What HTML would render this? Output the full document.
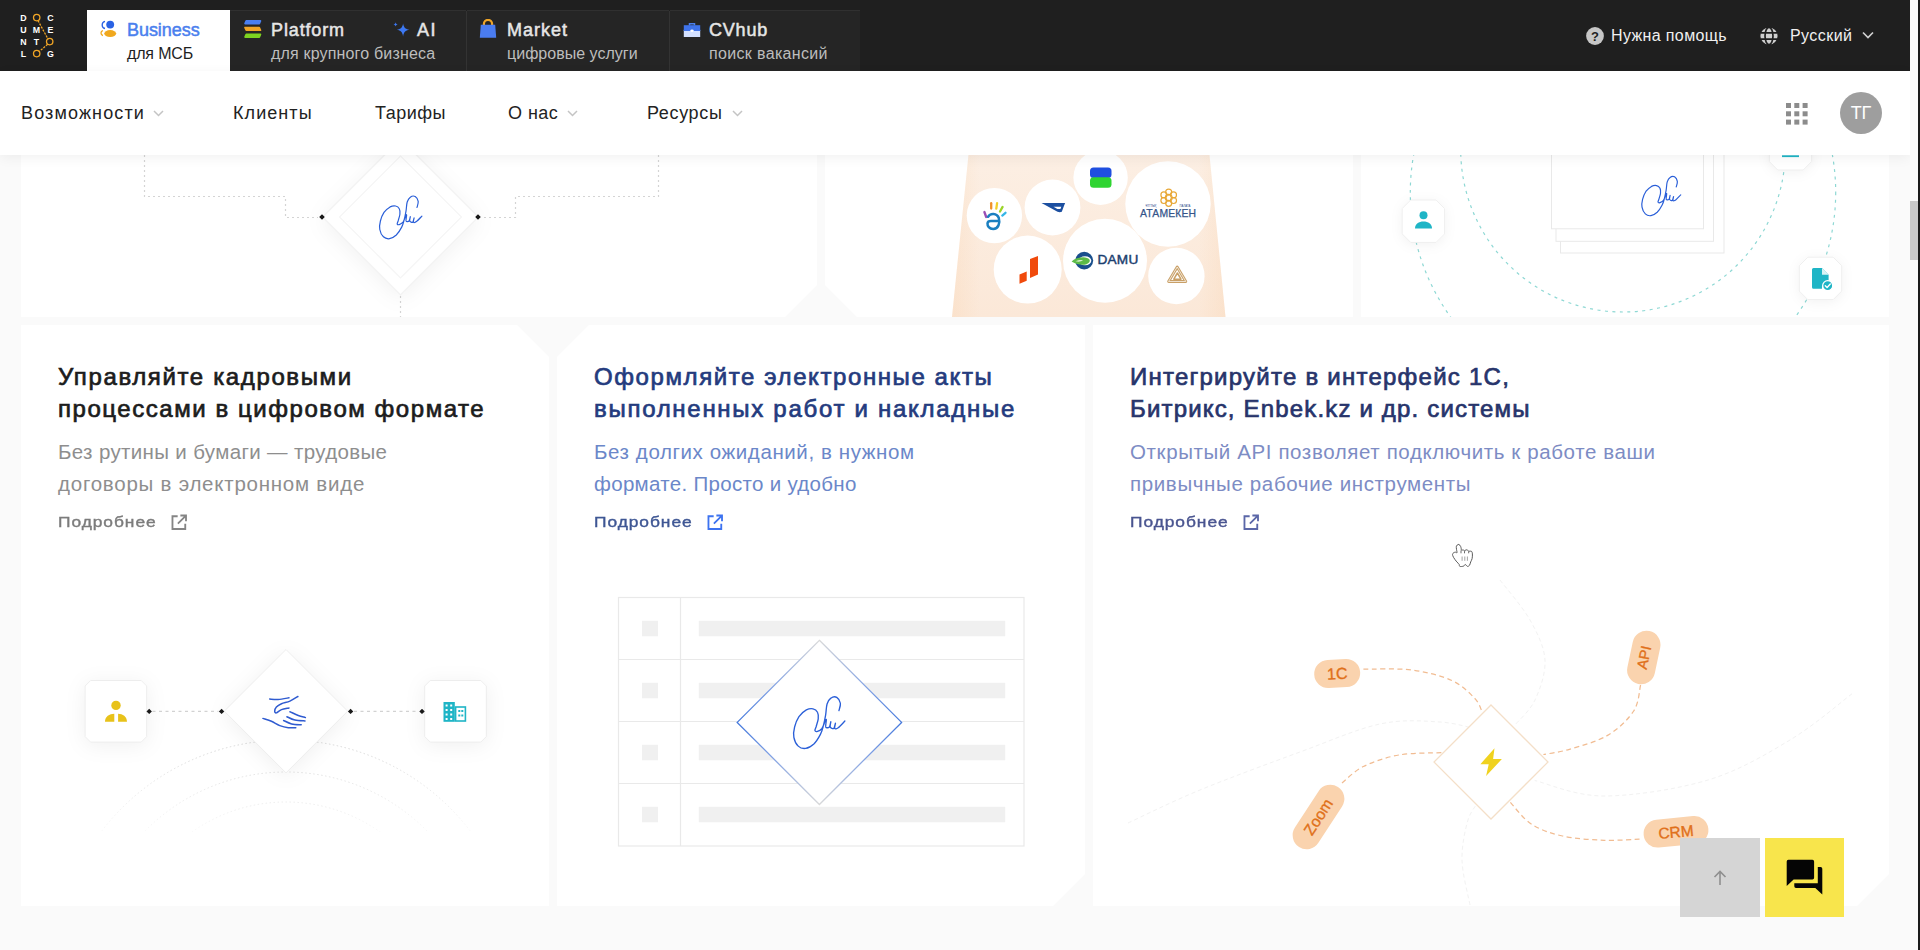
<!DOCTYPE html>
<html lang="ru">
<head>
<meta charset="utf-8">
<title>Documentolog Business</title>
<style>
*{box-sizing:border-box;margin:0;padding:0}
html,body{width:1920px;height:950px;overflow:hidden;background:#fafafa;font-family:"Liberation Sans",sans-serif;color:#1f1f1f}
.abs{position:absolute}
#page{position:absolute;left:0;top:0;width:1920px;height:950px;overflow:hidden;background:#fafafa}
/* ---------- top dark bar ---------- */
#topbar{position:absolute;left:0;top:0;width:1910px;height:71px;background:#1f1f1f}
.tab{position:absolute;top:10px;height:61px;background:#252525;border-top:1px solid #303030}
.tab.active{background:#fff;border-top:1px solid #fff;top:10px}
.tab .t1{position:absolute;white-space:nowrap;font-weight:normal;-webkit-text-stroke:.5px currentColor;font-size:18px;color:#e6e6e6;letter-spacing:0}
.tab .t2{position:absolute;white-space:nowrap;font-size:16px;color:#bdbdbd}
.tab.active .t1{color:#4a80ee}
.tab.active .t2{color:#1f1f1f}
.tsep{position:absolute;top:11px;width:1px;height:60px;background:#333}
.topr{position:absolute;white-space:nowrap;color:#f0f0f0;font-size:16px}
/* ---------- nav ---------- */
#nav{position:absolute;left:0;top:71px;width:1910px;height:84px;background:#fff;box-shadow:0 3px 12px rgba(0,0,0,.055);z-index:5}
.nv{position:absolute;top:0;height:84px;line-height:84px;font-size:18px;color:#222;white-space:nowrap}
/* ---------- cards ---------- */
.card{position:absolute;background:#fff;overflow:hidden}
.h{position:absolute;white-space:nowrap;font-weight:normal;-webkit-text-stroke:.7px currentColor;font-size:24px;line-height:32px}
.h span{display:block;width:max-content}
.d{position:absolute;white-space:nowrap;font-size:20.5px;line-height:32px}
.d span{display:block;width:max-content}
.more{position:absolute;white-space:nowrap;font-size:15.5px;font-weight:normal;-webkit-text-stroke:.4px currentColor;letter-spacing:.85px;transform:scaleX(1.12);transform-origin:0 0}
/* ---------- scrollbar ---------- */
#sb{position:absolute;left:1910px;top:0;width:10px;height:950px;background:#fafafa;z-index:20}
#sb i{position:absolute;left:0;top:201px;width:8px;height:59px;background:#c8c8c8}
#sb b{position:absolute;left:8px;top:0;width:2px;height:950px;background:#1a1a1a}
</style>
</head>
<body>
<div id="page">

<!-- CARDS ROW 1 -->
<div class="card" id="c1" style="left:21px;top:140px;width:796px;height:177px;clip-path:polygon(0 0,100% 0,100% 145px,764px 100%,0 100%)">
<svg class="abs" style="left:0;top:0" width="796" height="177" viewBox="0 0 796 177">
 <g fill="none" stroke="#d4d4d4" stroke-width="1.200" stroke-dasharray="2 3">
  <path d="M123.5 0V56.500H264.500V77.500H297"/>
  <path d="M637.5 0V56.500H494.500V77.500H461"/>
  <path d="M379.500 156V177"/>
 </g>
 <path d="M379.500 -1L457.500 77 379.500 155 301.500 77z" fill="#fff" stroke="#f3f3f3" stroke-width="1.500" style="filter:drop-shadow(0 4px 10px rgba(0,0,0,.05))"/>
 <path d="M379.500 16L440.500 77 379.500 138 318.500 77z" fill="#fff" stroke="#f5f5f5" stroke-width="1.200"/>
 <path d="M301 74.200l2.800 2.800-2.800 2.800-2.800-2.800z M457 74.200l2.800 2.800-2.800 2.800-2.800-2.800z" fill="#1a1a1a"/>
</svg><svg class="abs" style="left:349px;top:48px" width="60.0" height="58.0" viewBox="0 0 60 58"><path d="M47.0 19.5C47.2 18.5 48.5 15.3 48.2 13.4C47.9 11.6 46.5 9.3 45.2 8.5C43.9 7.8 41.6 8.2 40.3 9.2C39.0 10.1 38.0 11.7 37.2 14.0C36.5 16.4 36.5 20.2 36.0 23.2C35.5 26.1 34.9 29.1 34.2 31.7C33.5 34.4 33.1 36.5 31.7 39.1C30.4 41.6 28.3 45.1 26.3 47.0C24.2 48.9 21.7 50.4 19.5 50.7C17.4 51.0 15.1 50.4 13.4 48.8C11.8 47.3 10.3 44.2 9.8 41.5C9.3 38.9 9.7 35.8 10.4 33.0C11.1 30.1 12.4 26.8 14.0 24.4C15.7 22.1 18.2 20.0 20.1 18.9C22.1 17.9 24.1 17.7 25.6 18.0C27.2 18.3 28.6 19.4 29.3 20.8C30.0 22.1 30.1 24.2 29.9 26.3C29.7 28.3 28.5 31.3 28.1 33.0C27.6 34.6 27.0 35.4 27.2 36.0C27.4 36.6 28.3 36.9 29.3 36.6C30.3 36.3 31.9 35.5 33.0 34.2C34.0 32.9 34.8 29.9 35.4 28.7C36.0 27.5 36.5 26.1 36.6 26.9C36.8 27.6 35.7 31.9 36.1 33.0C36.5 34.0 38.4 33.7 39.1 33.0C39.8 32.3 40.2 28.7 40.3 28.7C40.4 28.7 39.4 32.1 39.8 33.0C40.2 33.9 42.0 34.7 42.7 34.2C43.4 33.7 44.0 29.9 44.1 29.9C44.2 29.9 43.1 33.6 43.5 34.2C43.9 34.8 45.0 34.6 46.4 33.6C47.8 32.6 51.0 29.0 51.9 28.1" fill="none" stroke="#2a5fd8" stroke-width="1.20" stroke-linecap="round"/></svg>
</div>
<div class="card" id="c2" style="left:825px;top:140px;width:528px;height:177px;clip-path:polygon(0 0,100% 0,100% 100%,32px 100%,0 145px)">
<svg class="abs" style="left:0;top:0" width="528" height="177" viewBox="0 0 528 177">
 <defs><linearGradient id="pg" x1="0" y1="0" x2="0" y2="1"><stop offset="0" stop-color="#fcefe4"/><stop offset="1" stop-color="#fbe8d8"/></linearGradient>
 <linearGradient id="pg2" x1="0" y1="0" x2="1" y2="0"><stop offset="0" stop-color="#f9cfa6" stop-opacity=".25"/><stop offset=".1" stop-color="#f9cfa6" stop-opacity="0"/><stop offset=".9" stop-color="#f9cfa6" stop-opacity="0"/><stop offset="1" stop-color="#f9cfa6" stop-opacity=".25"/></linearGradient></defs>
 <path d="M145 0H383L400.500 177H127z" fill="url(#pg)"/>
 <path d="M145 0H383L400.500 177H127z" fill="url(#pg2)"/>
 <g fill="#fff" style="filter:blur(.5px)"><circle cx="275.6" cy="37.7" r="27.2"/><circle cx="169.4" cy="75.6" r="27.7"/><circle cx="227.5" cy="67.5" r="27.9"/><circle cx="343.0" cy="64.0" r="42.7"/><circle cx="202.7" cy="129.6" r="34"/><circle cx="280.0" cy="120.8" r="42"/><circle cx="351.4" cy="136.0" r="28.2"/></g>
 <!-- B logo -->
 <rect x="265" y="27.500" width="21.500" height="10.600" rx="3.500" fill="#1f4fe0"/>
 <rect x="265" y="37.300" width="21.500" height="10.400" rx="3.500" fill="#2fd431"/>
 <!-- hand logo -->
 <g fill="none" stroke-linecap="round" stroke-width="2.300">
  <path d="M161.200 77l-1.800-5" stroke="#9b4fb5"/><path d="M166.200 68.600v-5.400" stroke="#f0902a"/><path d="M171.300 68.600l.8-5.400" stroke="#f2cf2a"/><path d="M175 71.500l2.600-4.600" stroke="#9bd42a"/><path d="M177.300 75.600l3.200-2.800" stroke="#35b6e6"/>
 </g>
 <path d="M163 76.800C165.200 72.800 172 72.800 173.800 78C175.300 83 173.300 89 168.200 89C164.200 89 162.300 86 162.500 83.300C162.700 81.400 164 81 166 81H174" fill="none" stroke="#1a7fc0" stroke-width="2.500" stroke-linecap="round"/>
 <!-- swoosh logo -->
 <path d="M216.500 63h23.600l-3.300 8.800c-1.200.5-3 .5-4.300 0z" fill="#1c4fa0"/>
 <path d="M228.500 66.800h7.800l-.9 2.300h-3z" fill="#fff"/>
 <!-- atameken -->
 <g fill="none" stroke="#e8a838" stroke-width="1.200"><circle cx="343.7" cy="52.1" r="3"/><circle cx="348.5" cy="54.9" r="3"/><circle cx="348.5" cy="60.5" r="3"/><circle cx="343.7" cy="63.3" r="3"/><circle cx="338.9" cy="60.5" r="3"/><circle cx="338.9" cy="54.9" r="3"/><circle cx="343.7" cy="57.7" r="3.400"/></g>
 <text x="343.100" y="77" font-family="Liberation Sans, sans-serif" font-size="10.400" letter-spacing=".150" text-anchor="middle" fill="#34548a" stroke="#34548a" stroke-width=".250">АТАМЕКЕН</text>
 <text x="326" y="67.300" font-family="Liberation Sans, sans-serif" font-size="2.800" text-anchor="middle" fill="#1f4487">ҰЛТТЫҚ</text>
 <text x="360" y="67.300" font-family="Liberation Sans, sans-serif" font-size="2.800" text-anchor="middle" fill="#1f4487">ПАЛАТА</text>
 <!-- orange bars -->
 <path d="M194.500 134.500l7.200-2.900v9.200l-7.200 3z M205 119l8-3v18.500l-8 3.400z" fill="#f04a0c"/>
 <!-- DAMU -->
 <ellipse cx="259.200" cy="120.600" rx="9" ry="8.800" fill="#1a4f8c"/>
 <ellipse cx="260" cy="120.800" rx="6.300" ry="4.500" fill="#fff"/>
 <path d="M246.600 121.500c4-3.600 11-5 15.500-3.600 2.600.8 3.400 2.600 2.200 4.300-2.600 3.400-10.500 3.700-17.700-.7z" fill="#5cba47"/>
 <path d="M250.500 121.300c2.500-1.300 5.500-1.700 7.500-1.200-1.500 1.600-4.500 2-7.500 1.200z" fill="#d4efc9"/>
 <text x="293" y="123.800" font-family="Liberation Sans, sans-serif" font-size="13.600" letter-spacing=".200" text-anchor="middle" fill="#1b3e6f" stroke="#1b3e6f" stroke-width=".450">DAMU</text>
 <!-- gold triangle -->
 <g fill="none" stroke="#c9a067" stroke-linejoin="round">
  <path d="M352.200 127l8.600 14.500h-17.200z" stroke-width="2.800"/>
  <path d="M352.200 127l8.600 14.500h-17.200z" stroke="#fff" stroke-width=".700"/>
  <path d="M352.400 133l3.600 6.200h-7.200z" stroke-width="1.500"/>
 </g>
</svg>
</div>
<div class="card" id="c3" style="left:1361px;top:140px;width:528px;height:177px">
<svg class="abs" style="left:0;top:0" width="528" height="177" viewBox="1361 140 528 177">
 <g fill="none" stroke="#8ed8d4" stroke-width="1.200" stroke-dasharray="3 4.500">
  <circle cx="1623" cy="192.400" r="212.700"/>
  <circle cx="1623" cy="149.700" r="162.300"/>
 </g>
 <g fill="#fff" stroke="#e9e9e9" stroke-width="1">
  <rect x="1560.500" y="130" width="163.500" height="123"/>
  <rect x="1556" y="130" width="157.500" height="111.300"/>
  <rect x="1551.500" y="130" width="152" height="98.800"/>
 </g>
 <g fill="#fff" stroke="#efefef" stroke-width="1" style="filter:drop-shadow(0 2px 6px rgba(0,0,0,.05))">
  <path d="M1410.7 200H1436.1L1444.6 208.5V233.9L1436.1 242.4H1410.7L1402.2 233.9V208.5z"/><path d="M1807.8 257.2H1833.2L1841.7 265.7V291.1L1833.2 299.6H1807.8L1799.3 291.1V265.7z"/><path d="M1777.8 127.6H1803.2L1811.7 136.1V161.5L1803.2 170H1777.8L1769.3 161.5V136.1z"/>
 </g>
 <!-- person -->
 <circle cx="1423.500" cy="215.300" r="4" fill="#1fb5c6"/>
 <path d="M1415 228.400c0-4.200 3.800-6.800 8.500-6.800s8.500 2.600 8.500 6.800z" fill="#1fb5c6"/>
 <!-- top icon remnant -->
 <rect x="1782" y="155.300" width="17" height="1.800" fill="#1fb5c6"/>
 <!-- doc check -->
 <path d="M1813.500 268.100h8.500l6.600 6.600v6a6.700 6.700 0 0 0-6.600 8H1813.500a1.500 1.500 0 0 1-1.500-1.500v-17.600a1.500 1.500 0 0 1 1.500-1.500z" fill="#1fb5c6"/>
 <path d="M1822 268.100v6.600h6.600z" fill="#d9f3f5"/>
 <circle cx="1827.700" cy="285.700" r="5" fill="#1fb5c6" stroke="#fff" stroke-width="1.200"/>
 <path d="M1825.300 285.700l1.800 1.800 3.200-3.400" fill="none" stroke="#fff" stroke-width="1.400" stroke-linecap="round" stroke-linejoin="round"/>
</svg><svg class="abs" style="left:271.72px;top:28.708px" width="55.2" height="53.4" viewBox="0 0 60 58"><path d="M47.0 19.5C47.2 18.5 48.5 15.3 48.2 13.4C47.9 11.6 46.5 9.3 45.2 8.5C43.9 7.8 41.6 8.2 40.3 9.2C39.0 10.1 38.0 11.7 37.2 14.0C36.5 16.4 36.5 20.2 36.0 23.2C35.5 26.1 34.9 29.1 34.2 31.7C33.5 34.4 33.1 36.5 31.7 39.1C30.4 41.6 28.3 45.1 26.3 47.0C24.2 48.9 21.7 50.4 19.5 50.7C17.4 51.0 15.1 50.4 13.4 48.8C11.8 47.3 10.3 44.2 9.8 41.5C9.3 38.9 9.7 35.8 10.4 33.0C11.1 30.1 12.4 26.8 14.0 24.4C15.7 22.1 18.2 20.0 20.1 18.9C22.1 17.9 24.1 17.7 25.6 18.0C27.2 18.3 28.6 19.4 29.3 20.8C30.0 22.1 30.1 24.2 29.9 26.3C29.7 28.3 28.5 31.3 28.1 33.0C27.6 34.6 27.0 35.4 27.2 36.0C27.4 36.6 28.3 36.9 29.3 36.6C30.3 36.3 31.9 35.5 33.0 34.2C34.0 32.9 34.8 29.9 35.4 28.7C36.0 27.5 36.5 26.1 36.6 26.9C36.8 27.6 35.7 31.9 36.1 33.0C36.5 34.0 38.4 33.7 39.1 33.0C39.8 32.3 40.2 28.7 40.3 28.7C40.4 28.7 39.4 32.1 39.8 33.0C40.2 33.9 42.0 34.7 42.7 34.2C43.4 33.7 44.0 29.9 44.1 29.9C44.2 29.9 43.1 33.6 43.5 34.2C43.9 34.8 45.0 34.6 46.4 33.6C47.8 32.6 51.0 29.0 51.9 28.1" fill="none" stroke="#2a5fd8" stroke-width="1.30" stroke-linecap="round"/></svg>
</div>

<!-- CARDS ROW 2 -->
<div class="card" id="c4" style="left:21px;top:325px;width:528px;height:581px;clip-path:polygon(0 0,496px 0,100% 32px,100% 100%,0 100%)">
<svg class="abs" style="left:0;top:0" width="528" height="581" viewBox="21 325 528 581">
 <defs><linearGradient id="fa" x1="0" y1="740" x2="0" y2="832" gradientUnits="userSpaceOnUse"><stop offset="0" stop-color="#d6d6d6"/><stop offset="1" stop-color="#d6d6d6" stop-opacity=".15"/></linearGradient>
 <clipPath id="ca"><rect x="60" y="735" width="460" height="97"/></clipPath></defs>
 <g fill="none" stroke="url(#fa)" stroke-width="1" stroke-dasharray="1.500 2.500" clip-path="url(#ca)">
  <circle cx="286" cy="972" r="232"/><circle cx="286" cy="970" r="198"/><circle cx="286" cy="964.300" r="162.300"/>
 </g>
 <g fill="#fff" stroke="#ededed" stroke-width="1" style="filter:drop-shadow(0 3px 10px rgba(0,0,0,.06))">
  <path d="M90.6 680.5H141.2L146.7 686V736.6L141.2 742.1H90.6L85.1 736.6V686z"/><path d="M430.2 680.5H480.8L486.3 686V736.6L480.8 742.1H430.2L424.7 736.6V686z"/>
  <path d="M286 649.500L347.700 711.200 286 772.900 224.300 711.200z"/>
 </g>
 <path d="M152.500 711.400H218.500M354 711.400H419" fill="none" stroke="#d2d2d2" stroke-width="1.200" stroke-dasharray="3 3.500"/>
 <path d="M149.2 708.7l2.7 2.7-2.7 2.7-2.7-2.7zM221.6 708.7l2.7 2.7-2.7 2.7-2.7-2.7zM350.6 708.7l2.7 2.7-2.7 2.7-2.7-2.7zM422 708.7l2.7 2.7-2.7 2.7-2.7-2.7z" fill="#1a1a1a"/>
 <!-- person -->
 <circle cx="116" cy="705.400" r="4.700" fill="#e8c21a"/>
 <path d="M105 721.800c0-5.200 4.400-8 9.300-8v8z M127 721.800c0-5.200-4.400-8-8.900-8v8z" fill="#e8c21a"/>
 <path d="M114.300 713.800h3.800l-.6 2.600.6 5.400h-3.800l.6-5.400z" fill="#e8c21a" opacity=".0"/>
 <!-- building -->
 <rect x="443.500" y="702" width="11.300" height="19.800" fill="#1fb5c6"/>
 <rect x="455.600" y="707" width="9.800" height="14" fill="#fff" stroke="#1fb5c6" stroke-width="1.600"/>
 <g fill="#fff"><rect x="445.6" y="704.5" width="2" height="2"/><rect x="445.6" y="709" width="2" height="2"/><rect x="445.6" y="713.5" width="2" height="2"/><rect x="445.6" y="718" width="2" height="2"/><rect x="450.2" y="704.5" width="2" height="2"/><rect x="450.2" y="709" width="2" height="2"/><rect x="450.2" y="713.5" width="2" height="2"/><rect x="450.2" y="718" width="2" height="2"/></g>
 <g fill="#1fb5c6"><rect x="458.300" y="710" width="2" height="2"/><rect x="461.300" y="710" width="2" height="2"/><rect x="458.300" y="714.500" width="2" height="2"/><rect x="461.300" y="714.500" width="2" height="2"/></g>
 <!-- handshake -->
 <path d="M269.7 699.0C271.1 699.1 274.9 699.7 278.1 699.5C281.3 699.3 287.2 698.1 289.0 697.8M297.9 696.5C296.6 697.3 292.6 699.9 289.9 701.1C287.2 702.3 283.8 702.7 281.5 703.7C279.2 704.7 277.5 705.8 276.4 707.0C275.3 708.2 274.7 710.2 274.7 711.2C274.7 712.2 275.3 713.2 276.4 712.9C277.5 712.6 279.4 710.4 281.5 709.6C283.6 708.8 287.8 708.2 289.0 707.9M289.9 711.7C291.3 712.3 295.7 714.5 298.3 715.5C300.9 716.5 304.2 717.2 305.4 717.6M286.9 716.7C288.2 717.3 291.9 719.4 294.9 720.1C297.9 720.8 303.3 720.8 305.0 720.9M283.6 720.5C284.9 721.1 288.7 723.2 291.6 723.9C294.5 724.6 299.6 724.6 301.2 724.7M262.9 718.4C264.3 718.9 268.6 720.1 271.4 721.3C274.2 722.5 277.0 724.5 279.8 725.6C282.6 726.7 285.5 727.4 288.2 727.7C290.9 728.1 294.5 727.7 295.8 727.7" fill="none" stroke="#2f5bd0" stroke-width="1.500" stroke-linecap="round"/>
</svg>
</div>
<div class="card" id="c5" style="left:557px;top:325px;width:528px;height:581px;clip-path:polygon(32px 0,100% 0,100% 549px,496px 100%,0 100%,0 32px)">
<svg class="abs" style="left:0;top:0" width="528" height="581" viewBox="557 325 528 581">
 <defs><linearGradient id="dg" x1="0" y1="640" x2="0" y2="805" gradientUnits="userSpaceOnUse"><stop offset="0" stop-color="#d9d9d9"/><stop offset=".3" stop-color="#7fa0e4"/><stop offset=".5" stop-color="#4478dc"/><stop offset=".7" stop-color="#7fa0e4"/><stop offset="1" stop-color="#d9d9d9"/></linearGradient></defs>
 <rect x="618.500" y="597.500" width="405.500" height="248.500" fill="#fff" stroke="#e9e9e9" stroke-width="1.200"/>
 <path d="M680.500 597.500V846M618.500 659.500H1024M618.500 721.500H1024M618.500 783.500H1024" fill="none" stroke="#e9e9e9" stroke-width="1.200"/>
 <g fill="#f0f0f0"><rect x="642" y="620.8" width="16" height="15.500"/><rect x="698.800" y="620.8" width="306.400" height="15.500"/><rect x="642" y="682.8" width="16" height="15.500"/><rect x="698.800" y="682.8" width="306.400" height="15.500"/><rect x="642" y="744.8" width="16" height="15.500"/><rect x="698.800" y="744.8" width="306.400" height="15.500"/><rect x="642" y="806.8" width="16" height="15.500"/><rect x="698.800" y="806.8" width="306.400" height="15.500"/></g>
 <path d="M819.400 640.300L901.600 722.400 819.400 804.500 737.200 722.400z" fill="#fff" stroke="url(#dg)" stroke-width="1.300"/>
</svg><svg class="abs" style="left:224.6px;top:361.8px" width="72.7" height="70.3" viewBox="0 0 60 58"><path d="M47.0 19.5C47.2 18.5 48.5 15.3 48.2 13.4C47.9 11.6 46.5 9.3 45.2 8.5C43.9 7.8 41.6 8.2 40.3 9.2C39.0 10.1 38.0 11.7 37.2 14.0C36.5 16.4 36.5 20.2 36.0 23.2C35.5 26.1 34.9 29.1 34.2 31.7C33.5 34.4 33.1 36.5 31.7 39.1C30.4 41.6 28.3 45.1 26.3 47.0C24.2 48.9 21.7 50.4 19.5 50.7C17.4 51.0 15.1 50.4 13.4 48.8C11.8 47.3 10.3 44.2 9.8 41.5C9.3 38.9 9.7 35.8 10.4 33.0C11.1 30.1 12.4 26.8 14.0 24.4C15.7 22.1 18.2 20.0 20.1 18.9C22.1 17.9 24.1 17.7 25.6 18.0C27.2 18.3 28.6 19.4 29.3 20.8C30.0 22.1 30.1 24.2 29.9 26.3C29.7 28.3 28.5 31.3 28.1 33.0C27.6 34.6 27.0 35.4 27.2 36.0C27.4 36.6 28.3 36.9 29.3 36.6C30.3 36.3 31.9 35.5 33.0 34.2C34.0 32.9 34.8 29.9 35.4 28.7C36.0 27.5 36.5 26.1 36.6 26.9C36.8 27.6 35.7 31.9 36.1 33.0C36.5 34.0 38.4 33.7 39.1 33.0C39.8 32.3 40.2 28.7 40.3 28.7C40.4 28.7 39.4 32.1 39.8 33.0C40.2 33.9 42.0 34.7 42.7 34.2C43.4 33.7 44.0 29.9 44.1 29.9C44.2 29.9 43.1 33.6 43.5 34.2C43.9 34.8 45.0 34.6 46.4 33.6C47.8 32.6 51.0 29.0 51.9 28.1" fill="none" stroke="#2a5fd8" stroke-width="1.11" stroke-linecap="round"/></svg>
</div>
<div class="card" id="c6" style="left:1093px;top:325px;width:796px;height:581px;clip-path:polygon(0 0,100% 0,100% 549px,764px 100%,0 100%)">
<svg class="abs" style="left:0;top:0" width="796" height="581" viewBox="1093 325 796 581">
 <path d="M1128.0 823.0C1140.0 817.5 1171.3 801.8 1200.0 790.0C1228.7 778.2 1270.0 763.0 1300.0 752.0C1330.0 741.0 1356.7 729.0 1380.0 724.0C1403.3 719.0 1423.3 721.0 1440.0 722.0C1456.7 723.0 1473.3 728.7 1480.0 730.0M1852.0 693.8C1841.7 701.5 1814.0 725.6 1790.0 740.0C1766.0 754.4 1739.0 770.7 1708.0 780.0C1677.0 789.3 1632.9 795.9 1604.0 796.0C1575.1 796.1 1546.2 783.1 1534.7 780.5M1500.0 580.0C1505.0 586.7 1522.5 606.7 1530.0 620.0C1537.5 633.3 1544.2 646.7 1545.0 660.0C1545.8 673.3 1540.0 689.2 1535.0 700.0C1530.0 710.8 1518.3 720.8 1515.0 725.0M1470.0 905.0C1468.7 897.5 1462.3 874.2 1462.0 860.0C1461.7 845.8 1465.0 830.0 1468.0 820.0C1471.0 810.0 1478.0 803.3 1480.0 800.0" fill="none" stroke="#f2f2f2" stroke-width="1" stroke-dasharray="4 3"/>
 <path d="M1363.4 669.2C1371.4 669.3 1396.7 668.1 1411.4 670.0C1426.1 671.9 1441.3 675.8 1451.8 680.5C1462.3 685.2 1469.5 693.0 1474.6 698.2C1479.7 703.5 1480.9 709.7 1482.2 712.0M1342.0 783.0C1345.6 780.2 1353.9 771.2 1363.4 766.5C1372.9 761.8 1385.8 757.3 1398.8 755.0C1411.8 752.7 1434.5 753.0 1441.7 752.6M1640.6 685.0C1639.4 689.3 1639.2 702.6 1633.7 711.0C1628.2 719.4 1618.3 729.0 1607.6 735.4C1596.9 741.8 1580.1 746.1 1569.4 749.3C1558.7 752.5 1547.7 753.6 1543.4 754.5M1510.4 802.4C1513.9 806.0 1522.6 818.4 1531.2 824.0C1539.9 829.6 1550.3 833.3 1562.5 836.0C1574.7 838.7 1590.8 839.8 1604.2 840.3C1617.6 840.8 1636.5 839.1 1643.0 838.9" fill="none" stroke="#f1bc92" stroke-width="1.250" stroke-dasharray="5 3.500"/>
 <path d="M1491 705L1548 762 1491 819 1434 762z" fill="#fff" stroke="#f4dfc8" stroke-width="1.250"/>
 <path d="M1494.500 748.300L1480.400 764.200h8.300l-2.600 11.800 15.800-17h-8.800z" fill="#f0d21f"/>
 <g transform="translate(1337.2 673.5) rotate(-3)"><rect x="-23.0" y="-14.0" width="46" height="28" rx="14.0" fill="#fad3ae"/><text x="0" y="5.6" text-anchor="middle" font-family="Liberation Sans, sans-serif" font-size="16" fill="#e0701a" stroke="#e0701a" stroke-width=".35">1C</text></g>
 <g transform="translate(1643.8 657.5) rotate(-78)"><rect x="-27.0" y="-14.0" width="54" height="28" rx="14.0" fill="#fad3ae"/><text x="0" y="5.2" text-anchor="middle" font-family="Liberation Sans, sans-serif" font-size="14.5" fill="#e0701a" stroke="#e0701a" stroke-width=".35">API</text></g>
 <g transform="translate(1318.5 817) rotate(-57)"><rect x="-35.75" y="-14.0" width="71.5" height="28" rx="14.0" fill="#fad3ae"/><text x="0" y="5.2" text-anchor="middle" font-family="Liberation Sans, sans-serif" font-size="15.5" fill="#e0701a" stroke="#e0701a" stroke-width=".35">Zoom</text></g>
 <g transform="translate(1676 831.800) rotate(-5.500)"><rect x="-32.5" y="-14.0" width="65" height="28" rx="14.0" fill="#fad3ae"/><text x="0" y="5.6" text-anchor="middle" font-family="Liberation Sans, sans-serif" font-size="15.5" fill="#e0701a" stroke="#e0701a" stroke-width=".35">CRM</text></g>
</svg>
</div>


<!-- CARD TEXTS -->
<div class="h" style="left:58px;top:361px;color:#1c1c1c"><span style="letter-spacing:1.63px">Управляйте кадровыми</span><span style="letter-spacing:1.55px">процессами в цифровом формате</span></div>
<div class="d" style="left:58px;top:436px;color:#8e8e8e"><span style="letter-spacing:0.35px">Без рутины и бумаги — трудовые</span><span style="letter-spacing:0.76px">договоры в электронном виде</span></div>
<div class="more" style="left:58px;top:512.500px;color:#7c7c7c">Подробнее</div>
<svg class="abs" style="left:168.5px;top:512.500px" width="19.500" height="19.500" viewBox="0 0 18 18" fill="none" stroke="#858585" stroke-width="1.700"><path d="M8 3H3.200v11.800H15V10"/><path d="M10.500 2.300h5.200v5.200M15.400 2.600L8.200 9.800"/></svg>
<div class="h" style="left:594px;top:361px;color:#243b7e"><span style="letter-spacing:1.59px">Оформляйте электронные акты</span><span style="letter-spacing:1.71px">выполненных работ и накладные</span></div>
<div class="d" style="left:594px;top:436px;color:#6b87c9"><span style="letter-spacing:0.59px">Без долгих ожиданий, в нужном</span><span style="letter-spacing:0.31px">формате. Просто и удобно</span></div>
<div class="more" style="left:594px;top:512.500px;color:#3f5794">Подробнее</div>
<svg class="abs" style="left:704.5px;top:512.500px" width="19.500" height="19.500" viewBox="0 0 18 18" fill="none" stroke="#3d73f0" stroke-width="1.700"><path d="M8 3H3.200v11.800H15V10"/><path d="M10.500 2.300h5.200v5.200M15.400 2.600L8.200 9.800"/></svg>
<div class="h" style="left:1130px;top:361px;color:#27346b"><span style="letter-spacing:1.24px">Интегрируйте в интерфейс 1С,</span><span style="letter-spacing:1.17px">Битрикс, Enbek.kz и др. системы</span></div>
<div class="d" style="left:1130px;top:436px;color:#7d8cc4"><span style="letter-spacing:0.61px">Открытый API позволяет подключить к работе ваши</span><span style="letter-spacing:0.64px">привычные рабочие инструменты</span></div>
<div class="more" style="left:1130px;top:512.500px;color:#4a5590">Подробнее</div>
<svg class="abs" style="left:1240.5px;top:512.500px" width="19.500" height="19.500" viewBox="0 0 18 18" fill="none" stroke="#5b67a8" stroke-width="1.700"><path d="M8 3H3.200v11.800H15V10"/><path d="M10.500 2.300h5.200v5.200M15.400 2.600L8.200 9.800"/></svg>

<!-- FLOATING BUTTONS -->
<div class="abs" style="left:1680px;top:838px;width:79.500px;height:78.500px;background:#d5d5d5;z-index:8">
 <svg class="abs" style="left:30px;top:30px" width="20" height="20" viewBox="0 0 20 20"><path d="M10 17V3.500M4.500 9L10 3.500 15.500 9" fill="none" stroke="#8f8f8f" stroke-width="1.600"/></svg>
</div>
<div class="abs" style="left:1765px;top:838px;width:79px;height:78.500px;background:#f8e54c;z-index:8">
 <svg class="abs" style="left:20px;top:20px" width="40" height="40" viewBox="0 0 40 40"><path d="M3.400 1.700h24a1.700 1.700 0 0 1 1.700 1.700v16.400a1.700 1.700 0 0 1-1.700 1.700H8.600L1.700 28V3.400a1.700 1.700 0 0 1 1.700-1.700z" fill="#050505"/><path d="M32.800 9h2.800a1.700 1.700 0 0 1 1.700 1.700V36.500l-7-6.500H11a1.700 1.700 0 0 1-1.700-1.700V25.300h23.500z" fill="#050505"/></svg>
</div>
<!-- cursor -->
<svg class="abs" style="left:1450px;top:541px;z-index:9" width="26" height="28" viewBox="0 0 26 28"><path d="M8.1 3.3C7.8 3.6 6.7 4.3 6.4 5.2C6.1 6.0 6.4 7.2 6.5 8.3C6.6 9.4 7.2 11.2 7.0 11.7C6.9 12.2 6.1 11.2 5.6 11.2C5.0 11.2 4.2 11.3 3.7 11.7C3.2 12.0 2.6 12.6 2.5 13.4C2.5 14.1 2.8 15.0 3.5 16.3C4.2 17.6 5.9 19.8 6.8 20.9C7.8 22.1 8.7 22.5 9.1 23.3C9.6 24.0 9.0 25.0 9.8 25.4C10.5 25.7 12.7 25.5 13.6 25.1C14.5 24.8 14.6 23.4 15.3 23.5C15.9 23.5 16.7 25.2 17.4 25.4C18.1 25.5 18.9 25.0 19.5 24.3C20.0 23.6 20.3 22.1 20.7 20.9C21.2 19.8 21.8 18.9 22.1 17.6C22.4 16.2 22.5 14.1 22.4 12.9C22.3 11.7 22.1 10.9 21.6 10.4C21.1 10.0 19.9 10.2 19.5 10.2C19.0 10.2 19.2 10.8 18.8 10.6C18.5 10.4 18.0 9.2 17.4 8.9C16.8 8.7 15.7 8.9 15.3 9.1C14.8 9.3 14.9 10.2 14.6 10.2C14.3 10.2 13.9 9.0 13.4 8.8C12.8 8.7 11.9 9.6 11.5 9.2C11.2 8.9 11.3 7.4 11.0 6.6C10.8 5.8 10.5 4.9 10.0 4.3C9.5 3.8 8.4 3.5 8.1 3.3z" fill="#fff" stroke="#5a5a5a" stroke-width="1" stroke-linejoin="round"/><path d="M12.1 15.5V19.8M14.8 15.5V19.8M17.4 15.5V19.8" stroke="#8a8a8a" stroke-width=".800" fill="none"/><path d="M11.0 9.4V12.3M14.5 10.2V12.3M18.7 10.5V12.3" stroke="#5a5a5a" stroke-width=".900" fill="none"/></svg>

<!-- NAV -->
<div id="nav">
 <div class="nv" style="left:21px;letter-spacing:1.13px">Возможности</div>
 <svg class="abs" style="left:152px;top:38px" width="13" height="9" viewBox="0 0 13 9"><path d="M2 2l4.500 4.500L11 2" fill="none" stroke="#c4c4c4" stroke-width="1.500"/></svg>
 <div class="nv" style="left:233px;letter-spacing:1.07px">Клиенты</div>
 <div class="nv" style="left:375px;letter-spacing:0.48px">Тарифы</div>
 <div class="nv" style="left:508px;letter-spacing:0.46px">О нас</div>
 <svg class="abs" style="left:566px;top:38px" width="13" height="9" viewBox="0 0 13 9"><path d="M2 2l4.500 4.500L11 2" fill="none" stroke="#c4c4c4" stroke-width="1.500"/></svg>
 <div class="nv" style="left:647px;letter-spacing:0.65px">Ресурсы</div>
 <svg class="abs" style="left:731px;top:38px" width="13" height="9" viewBox="0 0 13 9"><path d="M2 2l4.500 4.500L11 2" fill="none" stroke="#c4c4c4" stroke-width="1.500"/></svg>
 <svg class="abs" style="left:1786px;top:32px" width="22" height="22" viewBox="0 0 22 22" fill="#8c8c8c">
  <rect x="0" y="0" width="5" height="5"/><rect x="8.300" y="0" width="5" height="5"/><rect x="16.600" y="0" width="5" height="5"/>
  <rect x="0" y="8.300" width="5" height="5"/><rect x="8.300" y="8.300" width="5" height="5"/><rect x="16.600" y="8.300" width="5" height="5"/>
  <rect x="0" y="16.600" width="5" height="5"/><rect x="8.300" y="16.600" width="5" height="5"/><rect x="16.600" y="16.600" width="5" height="5"/>
 </svg>
 <div class="abs" style="left:1840px;top:21px;width:42px;height:42px;border-radius:50%;background:#9e9e9e;color:#fff;font-size:18px;line-height:42px;text-align:center">ТГ</div>
</div>

<!-- TOP BAR -->
<div id="topbar">
<!-- logo -->
<svg class="abs" style="left:14px;top:8px" width="48" height="56" viewBox="0 0 48 56">
 <g font-family="Liberation Sans, sans-serif" font-weight="bold" font-size="8.800" fill="#fff" text-anchor="middle">
  <text x="9.5" y="12.6">D</text><text x="36.5" y="12.6">C</text>
  <text x="9.5" y="24.6">U</text><text x="22.5" y="24.6">M</text><text x="36.5" y="24.6">E</text>
  <text x="9.5" y="36.6">N</text><text x="22.5" y="36.6">T</text>
  <text x="9.5" y="48.6">L</text><text x="36.5" y="48.6">G</text>
 </g>
 <g fill="none" stroke="#f0a526" stroke-width="1.300">
  <circle cx="22.700" cy="9.600" r="3.200"/><circle cx="35.700" cy="33.600" r="3.200"/><circle cx="22.700" cy="45.600" r="3.200"/>
  <path d="M24 12.6 L34.2 31.4 M33.6 36.2 L24.8 43.9" stroke-dasharray="2.2 1.2"/>
 </g>
</svg>

<!-- Business tab -->
<div class="tab active" style="left:87px;width:143px">
 <svg class="abs" style="left:12px;top:9px" width="20" height="20" viewBox="0 0 20 20">
  <circle cx="11.200" cy="4.600" r="3.950" fill="#2a62e4"/>
  <path d="M6 1.300A3.700 3.700 0 0 0 6 8.500" fill="none" stroke="#2a62e4" stroke-width="1.300"/>
  <ellipse cx="11.200" cy="13.600" rx="6" ry="3.500" fill="#f0a81e"/>
  <path d="M4 10.600A2.500 2.500 0 0 0 4 15.500" fill="none" stroke="#f0a81e" stroke-width="1.300"/>
 </svg>
 <div class="t1" style="left:40px;top:9px;letter-spacing:-0.05px">Business</div>
 <div class="t2" style="left:40px;top:34px;letter-spacing:-0.16px">для МСБ</div>
</div>

<!-- Platform tab -->
<div class="tab" style="left:230px;width:236px">
 <svg class="abs" style="left:13px;top:8px" width="20" height="20" viewBox="0 0 20 20" stroke-linejoin="round" stroke-width="1.600">
  <path d="M3.200 1.900h14.300l-1.200 2.700H2z" fill="#4a7ff0" stroke="#4a7ff0"/><path d="M2 8.600h14.300l1.200 2.700H3.200z" fill="#f0a526" stroke="#f0a526"/><path d="M3.200 15.400h14.300l-1.200 2.700H2z" fill="#7ed321" stroke="#7ed321"/>
 </svg>
 <div class="t1" style="left:41px;top:9px;letter-spacing:0.87px">Platform</div>
 <svg class="abs" style="left:162px;top:10px" width="20" height="20" viewBox="0 0 20 20">
  <path d="M11.100 2.400c.7 4.100 2.100 5.500 6.400 6.400-4.300.9-5.700 2.300-6.400 6.600-.7-4.300-2.100-5.700-6.400-6.600 4.300-.9 5.700-2.300 6.400-6.400z" fill="#3d78f2"/>
  <path d="M3.600 1.200c.3 1.400.8 1.900 2.200 2.200-1.400.3-1.900.8-2.200 2.200-.3-1.400-.8-1.900-2.200-2.200 1.400-.3 1.900-.8 2.200-2.200z" fill="#3d78f2"/>
 </svg>
 <div class="t1" style="left:187px;top:9px;letter-spacing:1.38px">AI</div>
 <div class="t2" style="left:41px;top:34px;letter-spacing:0.17px">для крупного бизнеса</div>
</div>
<div class="tsep" style="left:466px"></div>

<!-- Market tab -->
<div class="tab" style="left:467px;width:202px">
 <svg class="abs" style="left:11px;top:8px" width="20" height="22" viewBox="0 0 20 22">
  <path d="M5.900 8V5a4.100 4.100 0 0 1 8.200 0V8" fill="none" stroke="#f0a526" stroke-width="2.200"/>
  <path d="M2.800 5.800h14.400l1 13H1.800z" fill="#4a7cf0"/>
 </svg>
 <div class="t1" style="left:40px;top:9px;letter-spacing:1.02px">Market</div>
 <div class="t2" style="left:40px;top:34px;letter-spacing:0.02px">цифровые услуги</div>
</div>
<div class="tsep" style="left:669px"></div>

<!-- CVhub tab -->
<div class="tab" style="left:670px;width:190px">
 <svg class="abs" style="left:12px;top:8.500px" width="20" height="20" viewBox="0 0 20 20">
  <path d="M7.500 5.600V3.700h5v1.900" fill="none" stroke="#4a80ee" stroke-width="1.500"/>
  <rect x="1.800" y="5.200" width="16.400" height="5.600" fill="#3f73ea"/>
  <rect x="1.800" y="10" width="16.400" height="7" fill="#d3e0ff"/>
  <path d="M1.800 9.500h5.800l1 1.400h2.800l1-1.400h5.800v1.500H1.800z" fill="#3f73ea"/>
  <rect x="8.800" y="9.600" width="2.400" height="2.300" fill="#fff"/>
 </svg>
 <div class="t1" style="left:39px;top:9px;letter-spacing:0.8px">CVhub</div>
 <div class="t2" style="left:39px;top:34px;letter-spacing:0.34px">поиск вакансий</div>
</div>

<!-- right side -->
<svg class="abs" style="left:1585.300px;top:25.600px" width="20" height="20" viewBox="0 0 20 20">
 <circle cx="10" cy="10" r="8.900" fill="#c6c6c6"/>
 <text x="10" y="14.600" font-family="Liberation Sans, sans-serif" font-weight="bold" font-size="13" text-anchor="middle" fill="#1f1f1f">?</text>
</svg>
<div class="topr" style="left:1611px;top:27px;letter-spacing:0.37px">Нужна помощь</div>
<svg class="abs" style="left:1758.800px;top:25.600px" width="20" height="20" viewBox="0 0 20 20">
 <circle cx="10" cy="10" r="8.600" fill="#cfcfcf"/>
 <g fill="none" stroke="#1f1f1f" stroke-width="1.700">
  <ellipse cx="10" cy="10" rx="4" ry="8.600"/>
  <path d="M1.400 6.800h17.200M1.400 13.200h17.200"/>
 </g>
</svg>
<div class="topr" style="left:1790px;top:27px;letter-spacing:0.44px">Русский</div>
<svg class="abs" style="left:1861px;top:30px" width="14" height="10" viewBox="0 0 14 10"><path d="M2 2.500l5 5 5-5" fill="none" stroke="#d0d0d0" stroke-width="1.700"/></svg>
</div>

<!-- SCROLLBAR -->
<div id="sb"><i></i><b></b></div>

</div>
</body>
</html>
